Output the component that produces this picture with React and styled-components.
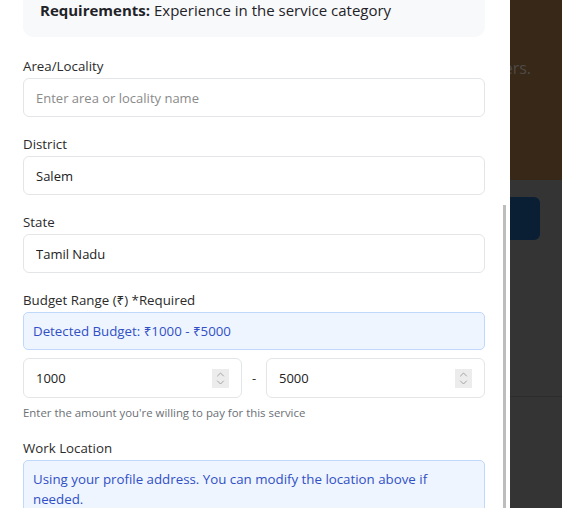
import React from "react";
import styled, { createGlobalStyle } from "styled-components";

const Global = createGlobalStyle`
  html, body { margin: 0; padding: 0; height: 100%; overflow: hidden; }
  body { font-family: "Open Sans", "Noto Sans", sans-serif; }
  * { box-sizing: border-box; }
`;

const Screen = styled.div`
  display: flex;
  width: 562px;
  height: 508px;
  overflow: hidden;
`;

const Panel = styled.div`
  position: relative;
  width: 510px;
  flex: none;
  background: #ffffff;
  overflow: hidden;
`;

const Content = styled.div`
  margin-top: -17px;
  padding: 0 25px 0 23px;
  display: flex;
  flex-direction: column;
`;

const Card = styled.div`
  background: #f8f9fb;
  border-radius: 10px;
  padding: 16px 17px;
  font-size: 15px;
  line-height: 22px;
  color: #1f2328;
  margin-bottom: 19px;
`;

const Strong = styled.strong`
  font-weight: 700;
`;

const Field = styled.div`
  display: flex;
  flex-direction: column;
  margin-bottom: 17px;
`;

const Label = styled.label`
  font-size: 13.3px;
  line-height: 20px;
  color: #2b2b2b;
  margin-bottom: 2px;
`;

const Input = styled.input`
  height: 39px;
  width: 100%;
  border: 1px solid #e3e5e8;
  border-radius: 6px;
  padding: 0 12px;
  font-family: inherit;
  font-size: 13px;
  color: #222;
  background: #fff;
  outline: none;
  &::placeholder { color: #8a8a8a; }
`;

const InfoBox = styled.div`
  background: #eef5ff;
  border: 1px solid #bfd8fb;
  border-radius: 5px;
  padding: 8px 14px 8px 9px;
  font-size: 13.3px;
  line-height: 20px;
  color: #3150c6;
`;

const RangeRow = styled.div`
  display: flex;
  align-items: center;
  gap: 9px;
  margin-top: 8px;
`;

const NumberBox = styled.div`
  flex: 1;
  display: flex;
  align-items: center;
  height: 40px;
  border: 1px solid #e3e5e8;
  border-radius: 6px;
  padding: 0 12px;
  background: #fff;
`;

const NumberText = styled.input`
  flex: 1;
  min-width: 0;
  border: none;
  outline: none;
  font-family: inherit;
  font-size: 13px;
  color: #222;
  background: transparent;
  padding: 0;
`;

const Spinner = styled.div`
  width: 17px;
  height: 19px;
  background: #ececec;
  display: flex;
  align-items: center;
  justify-content: center;
`;

const Dash = styled.span`
  font-size: 13px;
  color: #333;
  width: 6px;
  text-align: center;
`;

const Helper = styled.div`
  font-size: 11.4px;
  line-height: 16px;
  color: #6b6f76;
  margin-top: 7px;
`;

const ScrollThumb = styled.div`
  position: absolute;
  left: 503px;
  top: 205px;
  width: 3px;
  bottom: 0;
  background: #bdbdbd;
`;

const Backdrop = styled.div`
  flex: 1;
  min-width: 0;
  display: flex;
  flex-direction: column;
  background: #343434;
  overflow: hidden;
`;

const Hero = styled.div`
  height: 180px;
  background: #372818;
  display: flex;
  justify-content: flex-end;
  overflow: hidden;
  padding: 58px 31px 0 0;
`;

const HeroText = styled.div`
  white-space: nowrap;
  font-size: 16px;
  line-height: 20px;
  color: #4e4a47;
  flex: none;
`;

const ActionArea = styled.div`
  height: 217px;
  padding-top: 17px;
  border-bottom: 1px solid #2d2d2d;
`;

const ActionButton = styled.div`
  width: 30px;
  height: 43px;
  background: #0a1f34;
  border-radius: 0 6px 6px 0;
`;

function SpinIcon() {
  return (
    <svg width="9" height="15" viewBox="0 0 9 15" fill="none" stroke="#a3a3a3" strokeWidth="1" strokeLinecap="round" strokeLinejoin="round">
      <path d="M1.5 5 L4.5 2 L7.5 5" />
      <path d="M1.5 10 L4.5 13 L7.5 10" />
    </svg>
  );
}

function NumberInput({ value }) {
  return (
    <NumberBox>
      <NumberText defaultValue={value} />
      <Spinner>
        <SpinIcon />
      </Spinner>
    </NumberBox>
  );
}

export default function App() {
  return (
    <>
      <Global />
      <Screen>
        <Panel>
          <Content>
            <Card>
              <Strong>Requirements:</Strong> Experience in the service category
            </Card>
            <Field>
              <Label>Area/Locality</Label>
              <Input placeholder="Enter area or locality name" />
            </Field>
            <Field>
              <Label>District</Label>
              <Input defaultValue="Salem" />
            </Field>
            <Field>
              <Label>State</Label>
              <Input defaultValue="Tamil Nadu" />
            </Field>
            <Field>
              <Label>Budget Range (₹) *Required</Label>
              <InfoBox>Detected Budget: ₹1000 - ₹5000</InfoBox>
              <RangeRow>
                <NumberInput value="1000" />
                <Dash>-</Dash>
                <NumberInput value="5000" />
              </RangeRow>
              <Helper>Enter the amount you're willing to pay for this service</Helper>
            </Field>
            <Field>
              <Label>Work Location</Label>
              <InfoBox>Using your profile address. You can modify the location above if needed.</InfoBox>
            </Field>
          </Content>
          <ScrollThumb />
        </Panel>
        <Backdrop>
          <Hero>
            <HeroText>Connect with trusted local service providers.</HeroText>
          </Hero>
          <ActionArea>
            <ActionButton />
          </ActionArea>
        </Backdrop>
      </Screen>
    </>
  );
}
